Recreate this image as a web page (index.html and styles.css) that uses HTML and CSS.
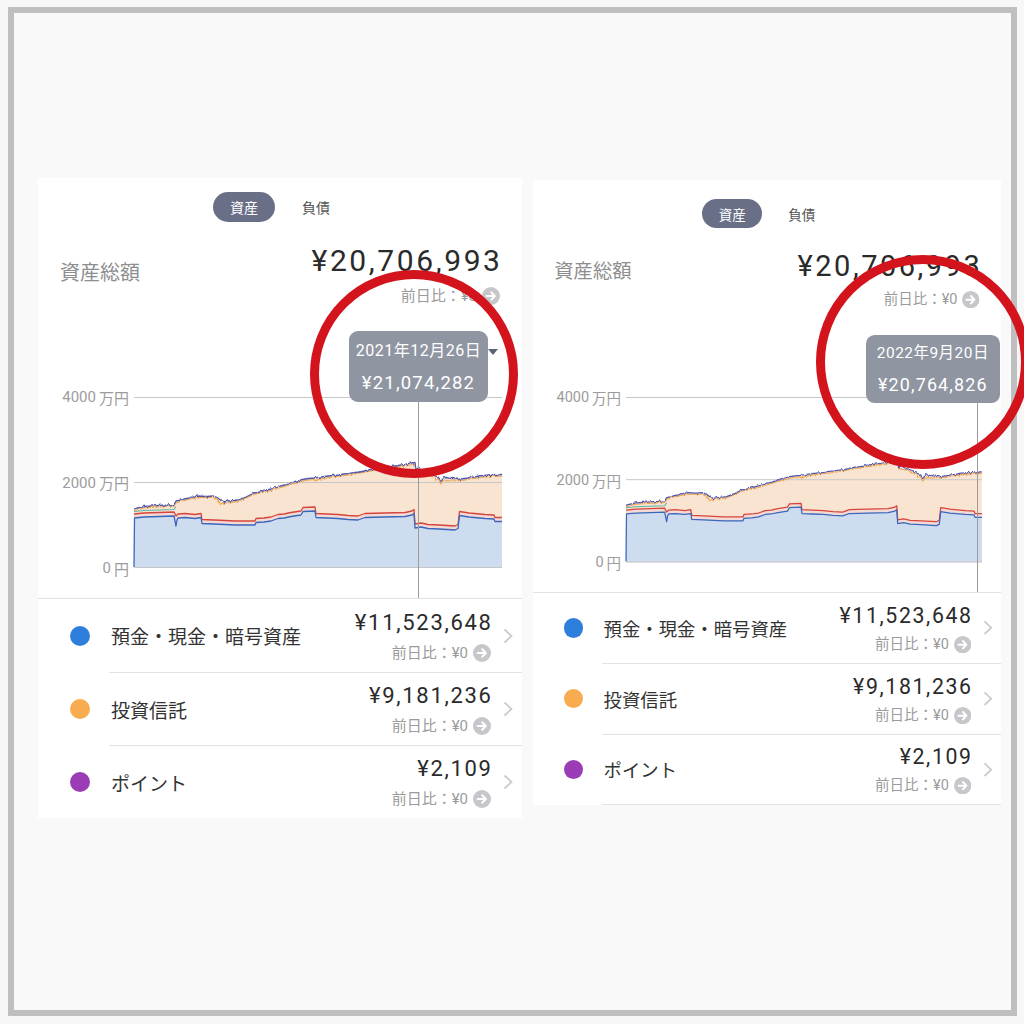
FILE: index.html
```html
<!DOCTYPE html>
<html lang="ja">
<head>
<meta charset="utf-8">
<title>資産</title>
<link rel="stylesheet" href="styles.css">
</head>
<body>
<div class="frame">
  <div class="cards">
    <section class="card">
      <div class="tabs"><span class="tab tab--active">資産</span><span class="tab">負債</span></div>
      <div class="head">
        <div class="head-label head-label--low">資産総額</div>
        <div class="head-values">
          <div class="head-amount">¥20,706,993</div>
          <div class="diff">前日比：¥0<svg class="diff-icon" viewBox="0 0 18 18"><circle cx="9" cy="9" r="9" fill="#c6c6cb"/><path d="M4.6 9h8.2M9.2 5.2 12.9 9 9.2 12.8" fill="none" stroke="#fff" stroke-width="2" stroke-linecap="round" stroke-linejoin="round"/></svg></div>
        </div>
      </div>
      <div class="chart">
        <div class="axis"><span>4000<i class="unit">万円</i></span><span>2000<i class="unit">万円</i></span><span>0<i class="unit">円</i></span></div>
        <svg class="plot" viewBox="0 0 368 171">
          <defs>
            <filter id="jitter" x="-5%" y="-20%" width="110%" height="140%">
              <feTurbulence type="fractalNoise" baseFrequency="0.45 0.08" numOctaves="2" seed="3" result="n"/>
              <feDisplacementMap in="SourceGraphic" in2="n" scale="3.2" xChannelSelector="R" yChannelSelector="G"/>
            </filter>
            <g id="chart-data">
              <path fill="#f9e4d1" d="M0,112 L3,111 L10,109.5 L18,109 L25,108.5 L33,108 L40,107.5 L42,104 L47,103 L50,102 L55,101 L58,100 L64,99 L72,99.5 L80,99 L84,101 L87,103.5 L89,105 L92,104.5 L95,104 L100,103.5 L104,103 L108,101.5 L112,100 L116,98 L120,96 L124,95.5 L128,94.5 L133,93 L137,92 L142,90.5 L146,89 L151,88 L157,86 L161,84.5 L165,83.5 L171,82 L175,81.5 L180,81 L187,80 L194,79 L200,78.5 L205,78 L210,77 L215,76.5 L221,75.5 L226,75 L230,74 L237,72.5 L242,72 L246,71.5 L250,70.5 L254,70 L258,69.5 L262,69 L267,68 L271,67.5 L275,66.5 L278,66 L281,65.5 L282,73 L284,71 L287,72.5 L290,74 L293,75 L296,76 L299,77.5 L301,79 L304,80 L305,81 L307,84 L309,82 L311,80.5 L314,81 L318,81.5 L321,82 L324,82.5 L327,82 L330,81.5 L334,81 L337,80.5 L341,80 L345,79 L350,78.5 L355,78 L359,78.5 L362,78.5 L365,77.5 L368,77.5 L368,171 L0,171 Z"/>
              <path fill="#f2dad6" d="M0,117 L10,116 L25,115.5 L40,115 L42,119 L44,117 L51,116.5 L61,117.5 L67,116.5 L68,122.5 L80,123 L91,123.5 L101,124 L121,124 L122,121.5 L130,121 L137,120 L144,117.5 L150,117 L157,115.5 L167,114 L169,110.5 L181,110 L182,116.5 L193,117 L204,117.5 L214,118.5 L224,119 L231,116.5 L250,116 L271,115.5 L278,114 L280,112.5 L281,127 L287,126 L294,127.5 L305,128 L321,129 L324,127.5 L325.5,114.5 L335,116 L351,117.5 L360,118 L361,120.5 L368,120.5 L368,171 L0,171 Z"/>
              <path fill="#cedcf0" d="M0,170 L0.5,121 L10,120 L25,119.5 L40,119 L42,129 L43,123 L44,121 L51,120.5 L61,121.5 L67,120.5 L68,126.5 L80,127 L91,127.5 L101,128 L121,128 L122,125.5 L130,125 L137,124 L144,121.5 L150,121 L157,119.5 L167,118 L169,114.5 L181,114 L182,120.5 L193,121 L204,121.5 L214,122.5 L224,123 L231,120.5 L250,120 L271,119.5 L278,118 L280,116.5 L281,131 L287,130 L294,131.5 L305,132 L321,133 L324,131.5 L325.5,118.5 L335,120 L351,121.5 L360,122 L361,124.5 L368,124.5 L368,171 L0,171 Z"/>
              <g class="grid">
                <line x1="0" y1="0.5" x2="368" y2="0.5"/>
                <line x1="0" y1="85.5" x2="368" y2="85.5"/>
                <line x1="0" y1="170.5" x2="368" y2="170.5"/>
              </g>
              <g class="jagged">
                <path class="ln ln-orange" d="M0,113.5 L10,111 L40,109 L42,106 L50,103.5 L58,101.5 L64,100.5 L80,100.5 L84,103 L87,108 L89,106.5 L104,104.5 L120,97.5 L137,93.5 L157,87.5 L171,83.5 L180,82.5 L182,85 L184,82.5 L194,80.5 L215,78 L237,74 L254,71.5 L271,69 L281,67 L282,74.5 L290,75.5 L301,80.5 L302,84 L304,81.5 L307,87 L309,83.5 L324,84 L337,82 L350,80 L368,79"/>
                <path class="ln ln-top" d="M0,112 L3,111 L10,109.5 L18,109 L25,108.5 L33,108 L40,107.5 L42,104 L47,103 L50,102 L55,101 L58,100 L64,99 L72,99.5 L80,99 L84,101 L87,103.5 L89,105 L92,104.5 L95,104 L100,103.5 L104,103 L108,101.5 L112,100 L116,98 L120,96 L124,95.5 L128,94.5 L133,93 L137,92 L142,90.5 L146,89 L151,88 L157,86 L161,84.5 L165,83.5 L171,82 L175,81.5 L180,81 L187,80 L194,79 L200,78.5 L205,78 L210,77 L215,76.5 L221,75.5 L226,75 L230,74 L237,72.5 L242,72 L246,71.5 L250,70.5 L254,70 L258,69.5 L262,69 L267,68 L271,67.5 L275,66.5 L278,66 L281,65.5 L282,73 L284,71 L287,72.5 L290,74 L293,75 L296,76 L299,77.5 L301,79 L304,80 L305,81 L307,84 L309,82 L311,80.5 L314,81 L318,81.5 L321,82 L324,82.5 L327,82 L330,81.5 L334,81 L337,80.5 L341,80 L345,79 L350,78.5 L355,78 L359,78.5 L362,78.5 L365,77.5 L368,77.5"/>
              </g>
              <path class="ln ln-teal" d="M0,114.5 L10,113.5 L25,113 L40,112.5 L42,109.5"/>
              <path class="ln ln-red" d="M0,117 L10,116 L25,115.5 L40,115 L42,119 L44,117 L51,116.5 L61,117.5 L67,116.5 L68,122.5 L80,123 L91,123.5 L101,124 L121,124 L122,121.5 L130,121 L137,120 L144,117.5 L150,117 L157,115.5 L167,114 L169,110.5 L181,110 L182,116.5 L193,117 L204,117.5 L214,118.5 L224,119 L231,116.5 L250,116 L271,115.5 L278,114 L280,112.5 L281,127 L287,126 L294,127.5 L305,128 L321,129 L324,127.5 L325.5,114.5 L335,116 L351,117.5 L360,118 L361,120.5 L368,120.5"/>
              <path class="ln ln-blue" d="M0,170 L0.5,121 L10,120 L25,119.5 L40,119 L42,129 L43,123 L44,121 L51,120.5 L61,121.5 L67,120.5 L68,126.5 L80,127 L91,127.5 L101,128 L121,128 L122,125.5 L130,125 L137,124 L144,121.5 L150,121 L157,119.5 L167,118 L169,114.5 L181,114 L182,120.5 L193,121 L204,121.5 L214,122.5 L224,123 L231,120.5 L250,120 L271,119.5 L278,118 L280,116.5 L281,131 L287,130 L294,131.5 L305,132 L321,133 L324,131.5 L325.5,118.5 L335,120 L351,121.5 L360,122 L361,124.5 L368,124.5"/>
            </g>
          </defs>
          <use href="#chart-data"/>
        </svg>
        <div class="crosshair crosshair--left"></div>
        <div class="tooltip tooltip--left">
          <div class="tooltip-date">2021年12月26日</div>
          <div class="tooltip-amount">¥21,074,282</div>
        </div>
        <span class="caret"></span>
      </div>
      <ul class="list">
        <li class="row">
          <span class="dot dot--blue"></span>
          <div class="row-main">
            <span class="row-label">預金・現金・暗号資産</span>
            <div class="row-values">
              <div class="row-amount">¥11,523,648</div>
              <div class="diff">前日比：¥0<svg class="diff-icon" viewBox="0 0 18 18"><circle cx="9" cy="9" r="9" fill="#c6c6cb"/><path d="M4.6 9h8.2M9.2 5.2 12.9 9 9.2 12.8" fill="none" stroke="#fff" stroke-width="2" stroke-linecap="round" stroke-linejoin="round"/></svg></div>
            </div>
            <svg class="chevron" viewBox="0 0 10 16"><path d="M1.5 1.5 8.5 8 1.5 14.5" fill="none" stroke="#cacacf" stroke-width="1.8"/></svg>
          </div>
        </li>
        <li class="row">
          <span class="dot dot--orange"></span>
          <div class="row-main row-main--sep">
            <span class="row-label">投資信託</span>
            <div class="row-values">
              <div class="row-amount">¥9,181,236</div>
              <div class="diff">前日比：¥0<svg class="diff-icon" viewBox="0 0 18 18"><circle cx="9" cy="9" r="9" fill="#c6c6cb"/><path d="M4.6 9h8.2M9.2 5.2 12.9 9 9.2 12.8" fill="none" stroke="#fff" stroke-width="2" stroke-linecap="round" stroke-linejoin="round"/></svg></div>
            </div>
            <svg class="chevron" viewBox="0 0 10 16"><path d="M1.5 1.5 8.5 8 1.5 14.5" fill="none" stroke="#cacacf" stroke-width="1.8"/></svg>
          </div>
        </li>
        <li class="row">
          <span class="dot dot--purple"></span>
          <div class="row-main row-main--sep">
            <span class="row-label">ポイント</span>
            <div class="row-values">
              <div class="row-amount">¥2,109</div>
              <div class="diff">前日比：¥0<svg class="diff-icon" viewBox="0 0 18 18"><circle cx="9" cy="9" r="9" fill="#c6c6cb"/><path d="M4.6 9h8.2M9.2 5.2 12.9 9 9.2 12.8" fill="none" stroke="#fff" stroke-width="2" stroke-linecap="round" stroke-linejoin="round"/></svg></div>
            </div>
            <svg class="chevron" viewBox="0 0 10 16"><path d="M1.5 1.5 8.5 8 1.5 14.5" fill="none" stroke="#cacacf" stroke-width="1.8"/></svg>
          </div>
        </li>
      </ul>
    </section>

    <section class="card card--scaled">
      <div class="tabs"><span class="tab tab--active">資産</span><span class="tab">負債</span></div>
      <div class="head">
        <div class="head-label">資産総額</div>
        <div class="head-values">
          <div class="head-amount">¥20,706,993</div>
          <div class="diff">前日比：¥0<svg class="diff-icon" viewBox="0 0 18 18"><circle cx="9" cy="9" r="9" fill="#c6c6cb"/><path d="M4.6 9h8.2M9.2 5.2 12.9 9 9.2 12.8" fill="none" stroke="#fff" stroke-width="2" stroke-linecap="round" stroke-linejoin="round"/></svg></div>
        </div>
      </div>
      <div class="chart">
        <div class="axis"><span>4000<i class="unit">万円</i></span><span>2000<i class="unit">万円</i></span><span>0<i class="unit">円</i></span></div>
        <svg class="plot" viewBox="0 0 368 171"><use href="#chart-data"/></svg>
        <div class="crosshair crosshair--right"></div>
        <div class="tooltip tooltip--right">
          <div class="tooltip-date">2022年9月20日</div>
          <div class="tooltip-amount">¥20,764,826</div>
        </div>
      </div>
      <ul class="list">
        <li class="row">
          <span class="dot dot--blue"></span>
          <div class="row-main">
            <span class="row-label">預金・現金・暗号資産</span>
            <div class="row-values">
              <div class="row-amount">¥11,523,648</div>
              <div class="diff">前日比：¥0<svg class="diff-icon" viewBox="0 0 18 18"><circle cx="9" cy="9" r="9" fill="#c6c6cb"/><path d="M4.6 9h8.2M9.2 5.2 12.9 9 9.2 12.8" fill="none" stroke="#fff" stroke-width="2" stroke-linecap="round" stroke-linejoin="round"/></svg></div>
            </div>
            <svg class="chevron" viewBox="0 0 10 16"><path d="M1.5 1.5 8.5 8 1.5 14.5" fill="none" stroke="#cacacf" stroke-width="1.8"/></svg>
          </div>
        </li>
        <li class="row">
          <span class="dot dot--orange"></span>
          <div class="row-main row-main--sep">
            <span class="row-label">投資信託</span>
            <div class="row-values">
              <div class="row-amount">¥9,181,236</div>
              <div class="diff">前日比：¥0<svg class="diff-icon" viewBox="0 0 18 18"><circle cx="9" cy="9" r="9" fill="#c6c6cb"/><path d="M4.6 9h8.2M9.2 5.2 12.9 9 9.2 12.8" fill="none" stroke="#fff" stroke-width="2" stroke-linecap="round" stroke-linejoin="round"/></svg></div>
            </div>
            <svg class="chevron" viewBox="0 0 10 16"><path d="M1.5 1.5 8.5 8 1.5 14.5" fill="none" stroke="#cacacf" stroke-width="1.8"/></svg>
          </div>
        </li>
        <li class="row">
          <span class="dot dot--purple"></span>
          <div class="row-main row-main--sep row-main--last">
            <span class="row-label">ポイント</span>
            <div class="row-values">
              <div class="row-amount">¥2,109</div>
              <div class="diff">前日比：¥0<svg class="diff-icon" viewBox="0 0 18 18"><circle cx="9" cy="9" r="9" fill="#c6c6cb"/><path d="M4.6 9h8.2M9.2 5.2 12.9 9 9.2 12.8" fill="none" stroke="#fff" stroke-width="2" stroke-linecap="round" stroke-linejoin="round"/></svg></div>
            </div>
            <svg class="chevron" viewBox="0 0 10 16"><path d="M1.5 1.5 8.5 8 1.5 14.5" fill="none" stroke="#cacacf" stroke-width="1.8"/></svg>
          </div>
        </li>
      </ul>
    </section>
  </div>
  <div class="mark mark--left"></div>
  <div class="mark mark--right"></div>
</div>
</body>
</html>
```

FILE: styles.css
```css
* {
  box-sizing: border-box;
  margin: 0;
  padding: 0;
}

html,
body {
  width: 1024px;
  height: 1024px;
  overflow: hidden;
}

body {
  background: #f7f7f7;
  font-family: Roboto, "Noto Sans CJK JP", sans-serif;
  color: #2e2e2e;
}

.frame {
  position: relative;
  margin: 7px 0 0 8px;
  width: 1009px;
  height: 1009px;
  border: 6px solid #bfbfbf;
  background: #f9f9f9;
  padding: 165px 0 0 24px;
}

.cards {
  display: flex;
  align-items: flex-start;
  gap: 11px;
}

.card {
  width: 484px;
  background: #fff;
  padding-top: 14px;
}

.card--scaled {
  zoom: 0.967;
  margin-top: 2px;
  padding-top: 20px;
}

/* tabs */
.tabs {
  display: flex;
  justify-content: center;
  gap: 10px;
}

.tab {
  width: 62px;
  height: 30px;
  border-radius: 15px;
  display: flex;
  align-items: center;
  justify-content: center;
  font-size: 14px;
  color: #555;
}

.tab--active {
  background: #686f87;
  color: #fff;
}

/* header */
.head {
  display: flex;
  justify-content: space-between;
  align-items: flex-start;
  padding: 21px 22px 0 22px;
}

.head-label {
  margin-top: 10px;
  font-size: 20px;
  line-height: 28px;
  color: #8e8e8e;
}

.head-label--low {
  margin-top: 16px;
}

.head-values {
  display: flex;
  flex-direction: column;
  align-items: flex-end;
}

.head-amount {
  font-size: 30px;
  line-height: 36px;
  letter-spacing: 2.6px;
  margin-right: -2.6px;
  color: #2a2a2a;
}

.diff {
  display: flex;
  align-items: center;
  gap: 5px;
  font-size: 15px;
  line-height: 20px;
  color: #9b9b9b;
  white-space: nowrap;
}

.head .diff {
  margin-top: 7px;
}

.diff-icon {
  width: 18px;
  height: 18px;
  flex: none;
}

/* chart */
.chart {
  position: relative;
  height: 292px;
  display: grid;
  grid-template-columns: 91px 368px;
  column-gap: 5px;
  align-content: start;
  padding-top: 91px;
}

.axis {
  height: 171px;
  display: flex;
  flex-direction: column;
  justify-content: space-between;
  align-items: flex-end;
}

.axis span {
  height: 0;
  display: flex;
  align-items: center;
  font-size: 15px;
  color: #9c9c9c;
  white-space: nowrap;
}

.unit {
  font-style: normal;
  margin-left: 3px;
}

.plot {
  width: 368px;
  height: 171px;
  overflow: visible;
  display: block;
}

.grid line {
  stroke: #c6c6c6;
  stroke-width: 1;
}

.jagged {
  filter: url(#jitter);
}

.ln {
  fill: none;
  stroke-width: 1.3;
  stroke-linejoin: round;
}

.ln-top { stroke: #5158ab; }
.ln-orange { stroke: #efa54e; stroke-width: 1.1; }
.ln-teal { stroke: #58b6a6; stroke-width: 1.1; }
.ln-red { stroke: #d6443b; }
.ln-blue { stroke: #3a66bb; }

.crosshair {
  position: absolute;
  bottom: 0;
  width: 1px;
  background: #9b9b9b;
}

.crosshair--left {
  left: 380px;
  top: 96px;
}

.crosshair--right {
  left: 459px;
  top: 97px;
}

.tooltip {
  position: absolute;
  width: 139px;
  height: 71px;
  padding-top: 9px;
  background: #8f95a1;
  border-radius: 9px;
  color: #fff;
  display: flex;
  flex-direction: column;
  align-items: center;
  gap: 8px;
}

.tooltip--left {
  left: 311px;
  top: 25px;
}

.tooltip--right {
  left: 344px;
  top: 26px;
}

.tooltip-date {
  font-size: 16px;
  line-height: 22px;
  letter-spacing: 0.5px;
  white-space: nowrap;
}

.tooltip-amount {
  font-size: 18.5px;
  line-height: 26px;
  letter-spacing: 1.2px;
  white-space: nowrap;
}

.caret {
  position: absolute;
  left: 450px;
  top: 43px;
  border-left: 5.5px solid transparent;
  border-right: 5.5px solid transparent;
  border-top: 6px solid #5b6377;
}

/* list */
.list {
  list-style: none;
  border-top: 1px solid #e3e3e3;
}

.row {
  height: 73px;
  display: flex;
  padding-left: 32px;
}

.dot {
  width: 20px;
  height: 20px;
  border-radius: 50%;
  align-self: center;
  margin-right: 19px;
  flex: none;
}

.dot--blue { background: #2e7fdc; }
.dot--orange { background: #f8ab4f; }
.dot--purple { background: #9a3cb6; }

.row-main {
  flex: 1;
  display: flex;
  align-items: center;
  padding: 0 9px 0 2px;
}

.row-main--sep {
  border-top: 1px solid #e3e3e3;
}

.row-main--last {
  border-bottom: 2px solid #e3e3e3;
}

.row-label {
  flex: 1;
  font-size: 19px;
  color: #333;
  white-space: nowrap;
}

.row-values {
  display: flex;
  flex-direction: column;
  align-items: flex-end;
}

.row-amount {
  font-size: 22px;
  line-height: 28px;
  letter-spacing: 1.7px;
  margin-right: -1.7px;
  margin-bottom: 6px;
  color: #2a2a2a;
}

.chevron {
  width: 10px;
  height: 16px;
  margin-left: 12px;
  flex: none;
}

/* annotation circles */
.mark {
  position: absolute;
  border: 9px solid #d3141c;
  border-radius: 50%;
}

.mark--left {
  left: 296px;
  top: 257px;
  width: 208px;
  height: 208px;
}

.mark--right {
  left: 802px;
  top: 242px;
  width: 214px;
  height: 214px;
}
```
